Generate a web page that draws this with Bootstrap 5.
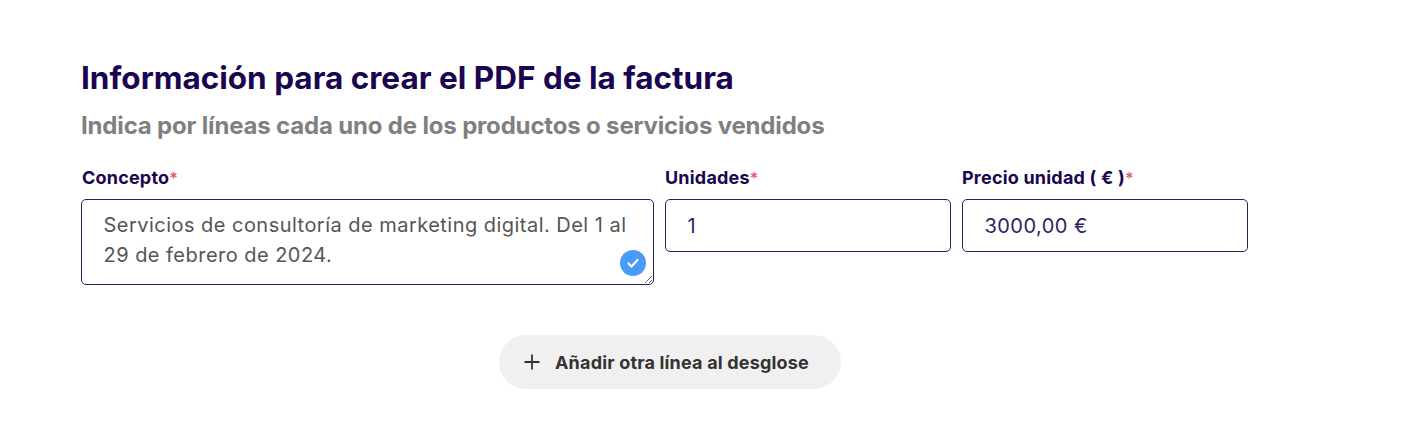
<!DOCTYPE html>
<html lang="es">
<head>
<meta charset="utf-8">
<title>Factura</title>
<link href="https://cdn.jsdelivr.net/npm/bootstrap@5.3.0/dist/css/bootstrap.min.css" rel="stylesheet">
<style>
body { font-family: Inter, sans-serif; background: #fff; color: #1c0b4f; }
.page-wrap { padding: 58px 0 0 81px; width: 1248px; box-sizing: content-box; }
.main-title { font-family: Inter, sans-serif; font-size: 31.5px; font-weight: 700; line-height: 40px; color: #1a0650; margin: 0 0 12px; }
.sub-title { font-size: 24px; font-weight: 700; line-height: 32px; color: #808080; margin: 0 0 24px; letter-spacing: -.17px; }
.fields { gap: 11px; }
.field-wide { width: 573px; }
.field-narrow { width: 286px; }
.field-label { font-size: 18px; font-weight: 700; line-height: 24px; color: #1a0650; margin: 0 0 9px; display: block; letter-spacing: .2px; padding-left: 1px; }
.field-narrow .field-label { padding-left: 0; }
.req { color: #e55a75; font-weight: 600; font-size: 16px; letter-spacing: 0; }
.field-input.form-control { border: 1px solid #2b2060; border-radius: 5px; padding: 11px 21.5px; font-size: 20px; line-height: 30px; color: #2e1f63; height: 53px; box-shadow: none; letter-spacing: .45px; }
.field-area.form-control { border: 1px solid #2b2060; border-radius: 5px; padding: 10px 21.5px 0; font-size: 20px; line-height: 30px; color: #555; height: 86px; min-height: 86px; overflow: hidden; box-shadow: none; letter-spacing: .47px; }
.check-mark { position: absolute; right: 8px; bottom: 9px; width: 26px; height: 26px; }
.add-row { margin-top: 50px; padding-left: 418px; }
.add-line.btn { background: #f0f0f0; border: 0; border-radius: 27px; height: 54px; width: 342px; color: #333; font-size: 18px; font-weight: 700; gap: 14px; padding: 0 0 0 24px; letter-spacing: .18px; }
.plus-icon { width: 18px; height: 18px; flex: none; }
</style>
</head>
<body>
<div class="page-wrap">
  <h1 class="main-title">Información para crear el PDF de la factura</h1>
  <h2 class="sub-title">Indica por líneas cada uno de los productos o servicios vendidos</h2>
  <form class="d-flex align-items-start fields">
    <div class="field-wide">
      <label class="field-label" for="c">Concepto<span class="req">*</span></label>
      <div class="position-relative">
        <textarea id="c" class="form-control field-area">Servicios de consultoría de marketing digital. Del 1 al 29 de febrero de 2024.</textarea>
        <svg class="check-mark" viewBox="0 0 26 26" aria-hidden="true"><circle cx="13" cy="13" r="13" fill="#4a9bf5"/><path d="M8.5 13.5l3 3 6-6.5" fill="none" stroke="#fff" stroke-width="2.2" stroke-linecap="round" stroke-linejoin="round"/></svg>
      </div>
    </div>
    <div class="field-narrow">
      <label class="field-label" for="u">Unidades<span class="req">*</span></label>
      <input id="u" class="form-control field-input" value="1">
    </div>
    <div class="field-narrow">
      <label class="field-label" for="p">Precio unidad ( € )<span class="req">*</span></label>
      <input id="p" class="form-control field-input" value="3000,00 €">
    </div>
  </form>
  <div class="add-row">
    <button type="button" class="btn add-line d-flex align-items-center">
      <svg class="plus-icon" viewBox="0 0 18 18" aria-hidden="true"><path d="M9 1.5v15M1.5 9h15" stroke="#333" stroke-width="1.8" fill="none"/></svg>
      <span>Añadir otra línea al desglose</span>
    </button>
  </div>
</div>
<script src="https://cdn.jsdelivr.net/npm/bootstrap@5.3.0/dist/js/bootstrap.bundle.min.js"></script>
</body>
</html>
